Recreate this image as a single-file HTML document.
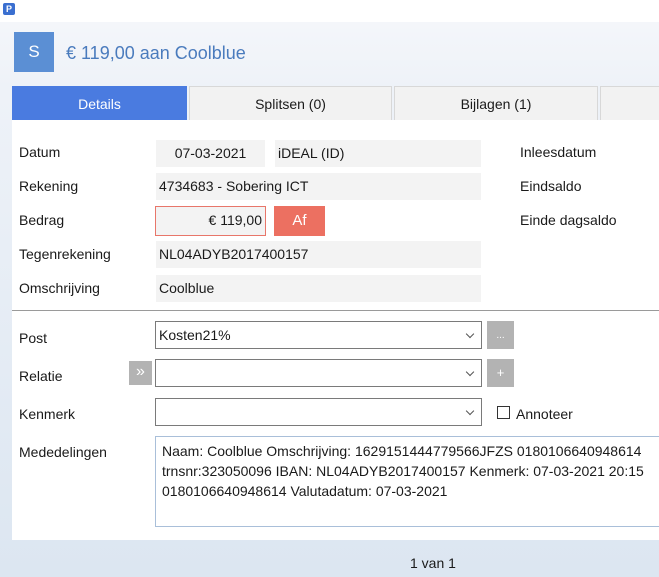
<!DOCTYPE html>
<html><head><style>
*{margin:0;padding:0;box-sizing:border-box}
body{width:659px;height:577px;overflow:hidden;font-family:"Liberation Sans",sans-serif;font-size:14px;color:#1a1a1a;position:relative;background:linear-gradient(#f4f6fa 22px,#eef2f8 90px,#dce6f1 577px)}
.a{position:absolute}
.f{position:absolute;background:#f3f3f3;padding-left:3px;line-height:27px;white-space:nowrap}
.l{position:absolute;left:19px}
.tab{position:absolute;top:86px;height:34px;background:#f2f2f2;border:1px solid #d8d8d8;border-bottom:none;text-align:center;line-height:34px}
.cb{position:absolute;left:155px;width:327px;background:#fff;border:1px solid #7a7a7a;padding-left:3px;line-height:26px}
.cb:after{content:"";position:absolute;right:8px;top:9px;width:5px;height:5px;border-right:1px solid #555;border-bottom:1px solid #555;transform:rotate(45deg)}
.gb{position:absolute;background:#b3b3b3;color:#fff;text-align:center}
</style></head><body>
<div class="a" style="left:0;top:0;width:659px;height:22px;background:#fff"></div>
<div class="a" style="left:3px;top:3px;width:12px;height:12px;background:#3a6fd0;border-radius:2px;color:#fff;font-size:9px;font-weight:bold;line-height:12px;text-align:center">P</div>
<div class="a" style="left:14px;top:32px;width:40px;height:40px;background:#5b8fd4;color:#fff;font-size:17px;line-height:40px;text-align:center">S</div>
<div class="a" style="left:66px;top:43px;font-size:18px;color:#4a7bbd">€ 119,00 aan Coolblue</div>
<div class="tab" style="left:12px;width:175px;background:#4a7be0;border-color:#4a7be0;color:#fff">Details</div>
<div class="tab" style="left:189px;width:203px">Splitsen (0)</div>
<div class="tab" style="left:394px;width:204px">Bijlagen (1)</div>
<div class="tab" style="left:600px;width:70px"></div>
<div class="a" style="left:12px;top:120px;width:647px;height:420px;background:#fff"></div>
<div class="l" style="top:144px">Datum</div>
<div class="l" style="top:178px">Rekening</div>
<div class="l" style="top:212px">Bedrag</div>
<div class="l" style="top:246px">Tegenrekening</div>
<div class="l" style="top:280px">Omschrijving</div>
<div class="f" style="left:156px;top:140px;width:109px;text-align:center;padding:0">07-03-2021</div>
<div class="f" style="left:275px;top:140px;width:206px">iDEAL (ID)</div>
<div class="f" style="left:156px;top:173px;width:325px">4734683 - Sobering ICT</div>
<div class="f" style="left:155px;top:206px;width:111px;height:30px;border:1px solid #e8766a;text-align:right;padding-right:3px">€ 119,00</div>
<div class="a" style="left:274px;top:206px;width:51px;height:30px;background:#ec7061;color:#fff;text-align:center;line-height:30px;font-size:15px">Af</div>
<div class="f" style="left:156px;top:241px;width:325px">NL04ADYB2017400157</div>
<div class="f" style="left:156px;top:275px;width:325px">Coolblue</div>
<div class="a" style="left:520px;top:144px">Inleesdatum</div>
<div class="a" style="left:520px;top:178px">Eindsaldo</div>
<div class="a" style="left:520px;top:212px">Einde dagsaldo</div>
<div class="a" style="left:12px;top:310px;width:647px;height:1px;background:#9a9a9a"></div>
<div class="l" style="top:330px">Post</div>
<div class="l" style="top:368px">Relatie</div>
<div class="l" style="top:406px">Kenmerk</div>
<div class="l" style="top:444px">Mededelingen</div>
<div class="cb" style="top:321px;height:28px">Kosten21%</div>
<div class="gb" style="left:487px;top:321px;width:27px;height:28px;line-height:30px;font-size:10px">...</div>
<div class="gb" style="left:129px;top:361px;width:23px;height:24px;line-height:22px;font-size:16px">»</div>
<div class="cb" style="top:359px;height:28px"></div>
<div class="gb" style="left:487px;top:359px;width:27px;height:28px;line-height:28px;font-size:13px">+</div>
<div class="cb" style="top:398px;height:28px"></div>
<div class="a" style="left:497px;top:406px;width:13px;height:13px;border:1px solid #333;background:#fff"></div>
<div class="a" style="left:516px;top:406px">Annoteer</div>
<div class="a" style="left:155px;top:436px;width:520px;height:91px;border:1px solid #a9bfd9;padding:4px 6px;line-height:20px;white-space:nowrap">Naam: Coolblue Omschrijving: 1629151444779566JFZS 0180106640948614<br>trnsnr:323050096 IBAN: NL04ADYB2017400157 Kenmerk: 07-03-2021 20:15<br>0180106640948614 Valutadatum: 07-03-2021</div>
<div class="a" style="left:410px;top:555px">1 van 1</div>
</body></html>
